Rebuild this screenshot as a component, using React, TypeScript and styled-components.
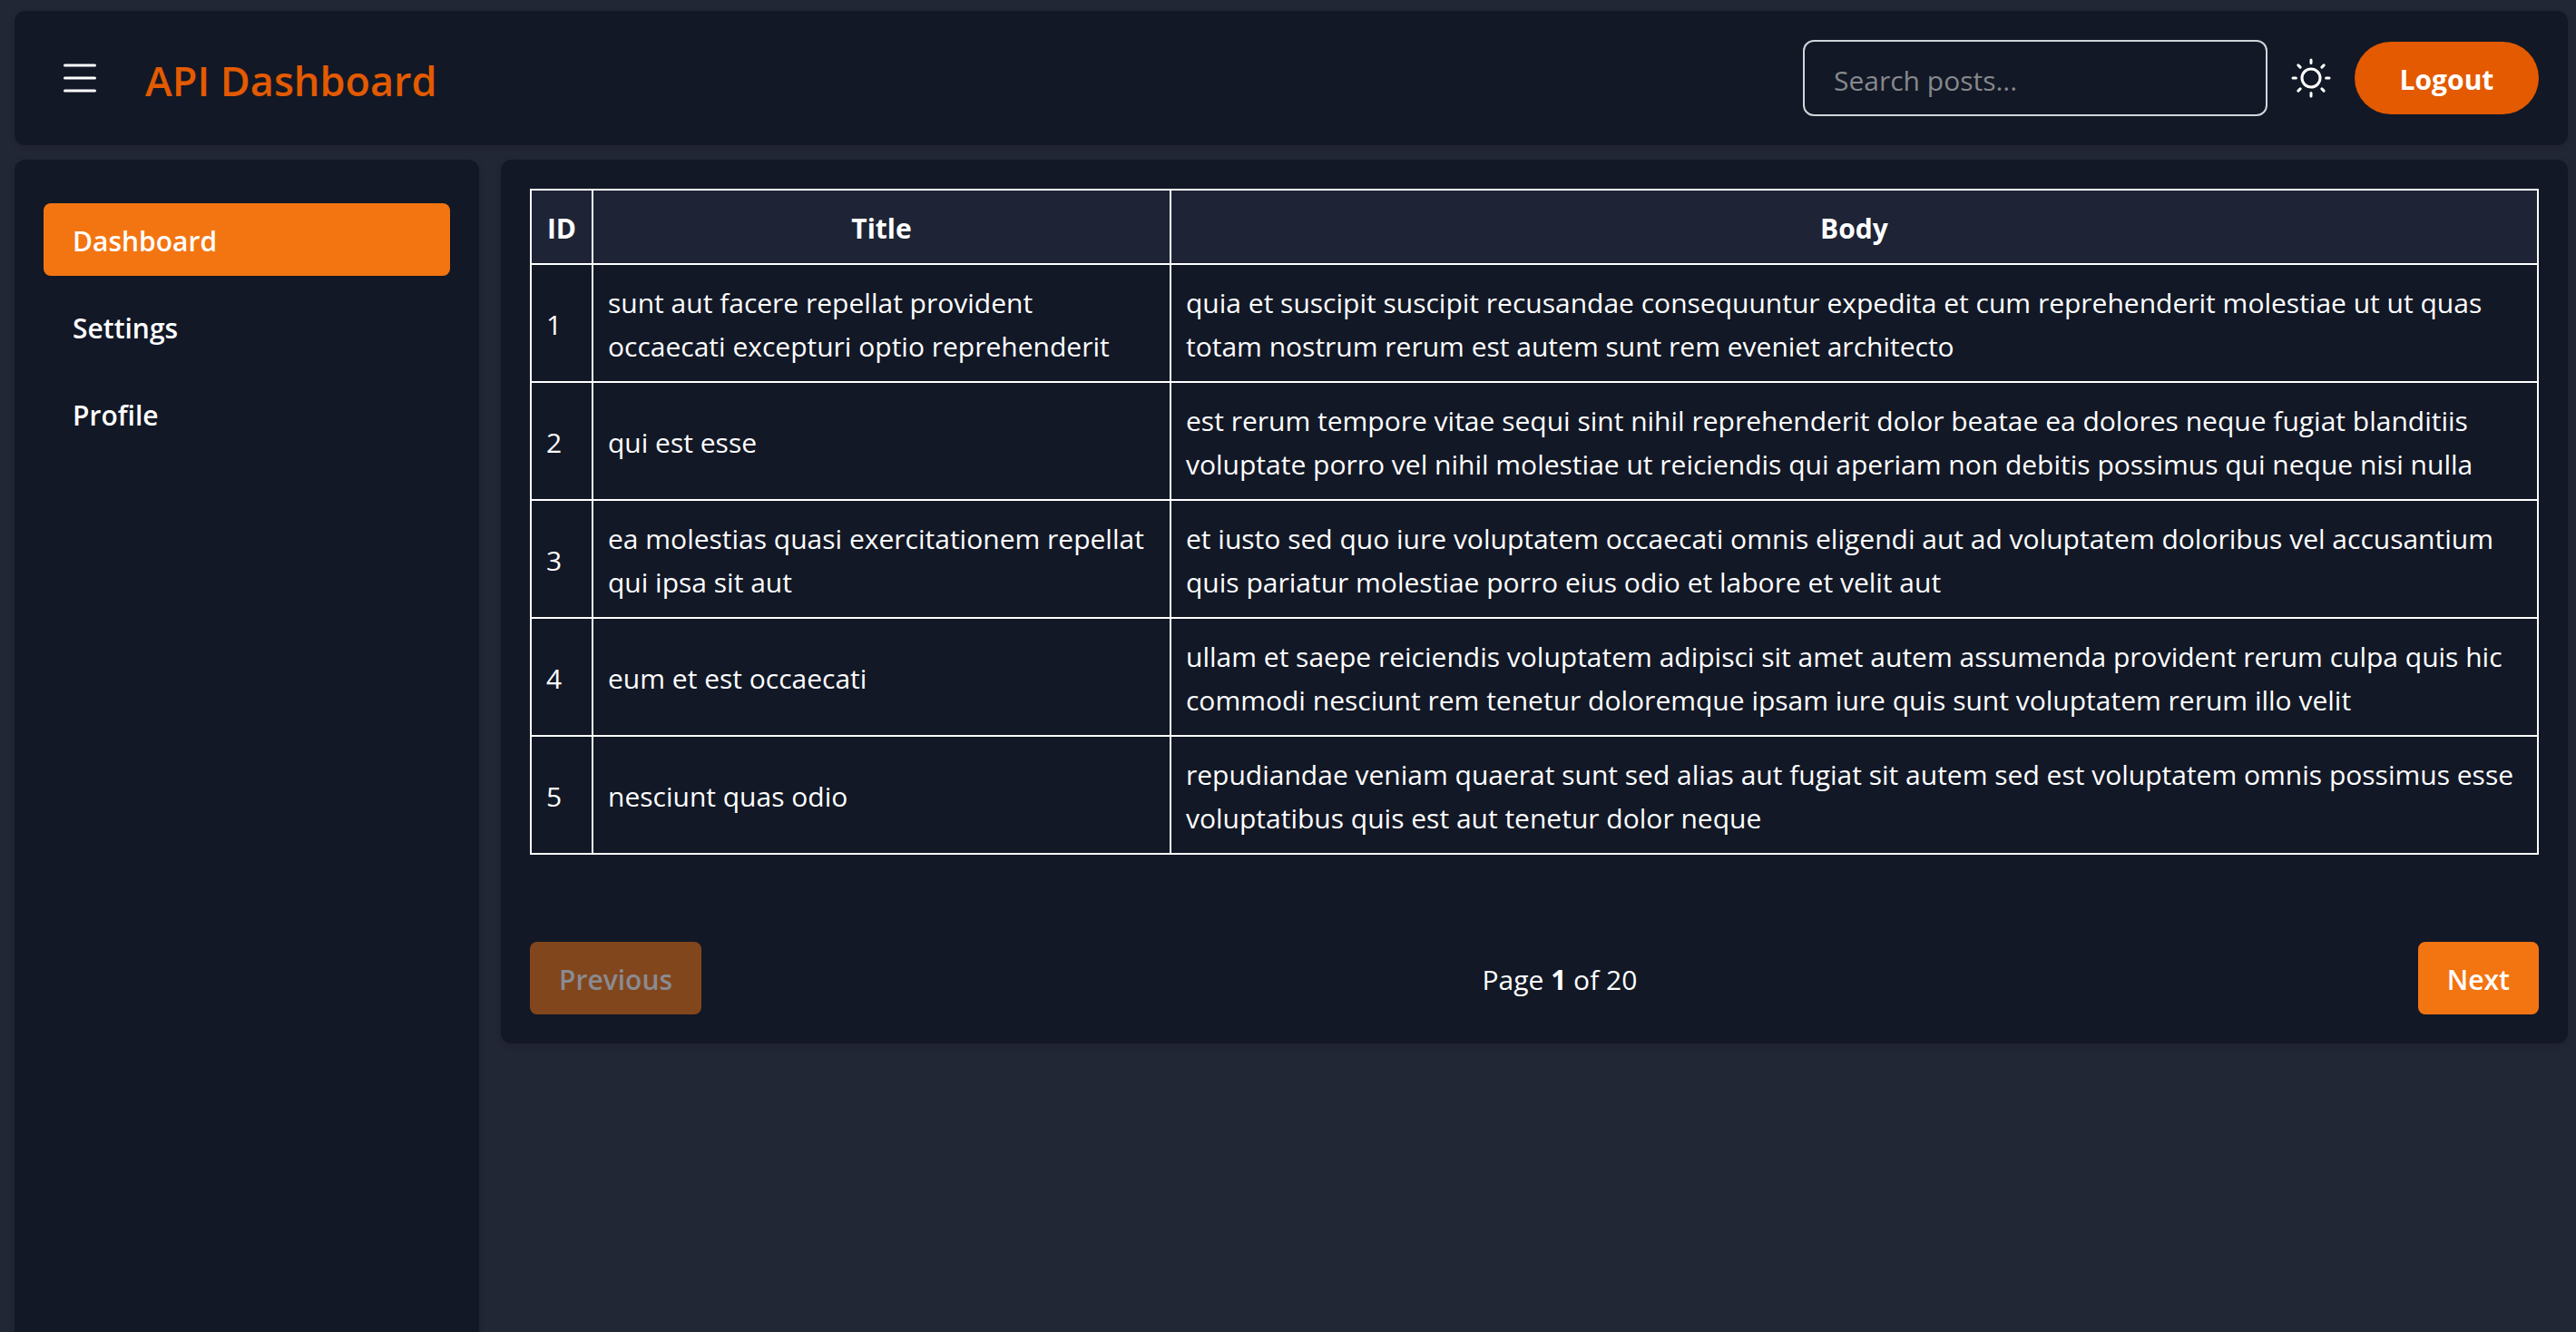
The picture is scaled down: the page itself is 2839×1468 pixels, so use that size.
import React, { useState } from "react";
import styled, { createGlobalStyle } from "styled-components";

const GlobalStyle = createGlobalStyle`
  *, *::before, *::after { box-sizing: border-box; }
  body {
    margin: 0;
    background: #222736;
    color: #fff;
    font-family: "Segoe UI", "Open Sans", "Noto Sans", sans-serif;
    font-size: 30px;
    line-height: 48px;
  }
  button, input { font: inherit; color: inherit; }
`;

const Page = styled.div`
  display: flex;
  flex-direction: column;
  gap: 16px;
  min-height: 100vh;
  padding: 12px 9px 0 16px;
`;

const panelShadow = "0 2px 6px rgba(30, 16, 24, 0.3)";

const Header = styled.header`
  display: flex;
  align-items: center;
  justify-content: space-between;
  padding: 32px 32px 32px 48px;
  border-radius: 12px;
  background: #121826;
  box-shadow: ${panelShadow};
`;

const Group = styled.div<{ $gap: number }>`
  display: flex;
  align-items: center;
  gap: ${(p) => p.$gap}px;
  min-height: 84px;
`;

const IconButton = styled.button`
  display: flex;
  padding: 0;
  border: 0;
  background: none;
  cursor: pointer;
`;

const Brand = styled.h1`
  margin: 0;
  padding-top: 6px;
  color: #e35a00;
  font-size: 45px;
  font-weight: 600;
  line-height: 64px;
`;

const Search = styled.input`
  width: 512px;
  height: 84px;
  padding: 4px 32px 0;
  border: 2px solid #d1d5db;
  border-radius: 12px;
  background: transparent;
  &::placeholder { color: #86888c; opacity: 1; }
`;

const Logout = styled.button`
  min-width: 203px;
  padding: 18px 48px 14px;
  border: 0;
  border-radius: 40px;
  background: #e35a00;
  font-weight: 700;
  cursor: pointer;
`;

const Columns = styled.div`
  display: flex;
  flex: 1;
  align-items: flex-start;
  gap: 24px;
`;

const Sidebar = styled.nav`
  display: flex;
  flex-direction: column;
  flex: 0 0 512px;
  align-self: stretch;
  gap: 16px;
  padding: 48px 32px;
  border-radius: 12px 12px 0 0;
  background: #121826;
  box-shadow: ${panelShadow};
`;

const NavLink = styled.a<{ $active: boolean }>`
  padding: 18px 32px 14px;
  border-radius: 8px;
  background: ${(p) => (p.$active ? "#f37512" : "transparent")};
  color: #fff;
  font-weight: 600;
  text-decoration: none;
`;

const Main = styled.main`
  flex: 1;
  min-width: 0;
  padding: 32px;
  border-radius: 12px;
  background: #121826;
  box-shadow: ${panelShadow};
`;

const Table = styled.table`
  width: 100%;
  table-layout: fixed;
  border-collapse: collapse;
  th, td {
    padding: 18px 16px 14px;
    border: 2px solid #fff;
  }
  th {
    background: #1e2435;
    font-weight: 700;
  }
`;

const Col = styled.col<{ $width?: number }>`
  width: ${(p) => (p.$width ? `${p.$width}px` : "auto")};
`;

const Pagination = styled.div`
  display: flex;
  align-items: center;
  justify-content: space-between;
  margin-top: 96px;
`;

const PageStatus = styled.span`
  padding: 18px 0 14px;
`;

const PageButton = styled.button`
  padding: 18px 32px 14px;
  border: 0;
  border-radius: 8px;
  background: #f37512;
  font-weight: 600;
  cursor: pointer;
  &:disabled {
    background: #82461c;
    color: #898b92;
    cursor: not-allowed;
  }
`;

const links = ["Dashboard", "Settings", "Profile"];

const posts = [
  {
    id: 1,
    title: "sunt aut facere repellat provident occaecati excepturi optio reprehenderit",
    body: "quia et suscipit suscipit recusandae consequuntur expedita et cum reprehenderit molestiae ut ut quas totam nostrum rerum est autem sunt rem eveniet architecto",
  },
  {
    id: 2,
    title: "qui est esse",
    body: "est rerum tempore vitae sequi sint nihil reprehenderit dolor beatae ea dolores neque fugiat blanditiis voluptate porro vel nihil molestiae ut reiciendis qui aperiam non debitis possimus qui neque nisi nulla",
  },
  {
    id: 3,
    title: "ea molestias quasi exercitationem repellat qui ipsa sit aut",
    body: "et iusto sed quo iure voluptatem occaecati omnis eligendi aut ad voluptatem doloribus vel accusantium quis pariatur molestiae porro eius odio et labore et velit aut",
  },
  {
    id: 4,
    title: "eum et est occaecati",
    body: "ullam et saepe reiciendis voluptatem adipisci sit amet autem assumenda provident rerum culpa quis hic commodi nesciunt rem tenetur doloremque ipsam iure quis sunt voluptatem rerum illo velit",
  },
  {
    id: 5,
    title: "nesciunt quas odio",
    body: "repudiandae veniam quaerat sunt sed alias aut fugiat sit autem sed est voluptatem omnis possimus esse voluptatibus quis est aut tenetur dolor neque",
  },
];

const MenuIcon = () => (
  <svg width="48" height="48" viewBox="0 0 48 48" fill="none" stroke="currentColor" strokeWidth="3" strokeLinecap="round" aria-hidden="true">
    <path d="M7.5 10h33M7.5 24h33M7.5 38h33" />
  </svg>
);

const SunIcon = () => (
  <svg width="48" height="48" viewBox="0 0 48 48" fill="none" stroke="currentColor" strokeWidth="3" strokeLinecap="round" aria-hidden="true">
    <circle cx="24" cy="24" r="10" />
    <path d="M24 4v3.4M24 40.6V44M4 24h3.4M40.6 24H44M9.9 9.9l2.2 2.2M35.9 35.9l2.2 2.2M9.9 38.1l2.2-2.2M35.9 12.1l2.2-2.2" />
  </svg>
);

export default function App() {
  const [active, setActive] = useState("Dashboard");
  const [query, setQuery] = useState("");

  return (
    <>
      <GlobalStyle />
      <Page>
        <Header>
          <Group $gap={48}>
            <IconButton type="button" aria-label="Toggle menu">
              <MenuIcon />
            </IconButton>
            <Brand>API Dashboard</Brand>
          </Group>
          <Group $gap={24}>
            <Search
              type="text"
              aria-label="Search posts"
              placeholder="Search posts..."
              value={query}
              onChange={(e) => setQuery(e.target.value)}
            />
            <IconButton type="button" aria-label="Toggle theme">
              <SunIcon />
            </IconButton>
            <Logout type="button">Logout</Logout>
          </Group>
        </Header>
        <Columns>
          <Sidebar>
            {links.map((name) => (
              <NavLink key={name} href={`#${name.toLowerCase()}`} $active={name === active} onClick={() => setActive(name)}>
                {name}
              </NavLink>
            ))}
          </Sidebar>
          <Main>
            <Table>
              <colgroup>
                <Col $width={68} />
                <Col $width={637} />
                <Col />
              </colgroup>
              <thead>
                <tr>
                  <th scope="col">ID</th>
                  <th scope="col">Title</th>
                  <th scope="col">Body</th>
                </tr>
              </thead>
              <tbody>
                {posts.map((post) => (
                  <tr key={post.id}>
                    <td>{post.id}</td>
                    <td>{post.title}</td>
                    <td>{post.body}</td>
                  </tr>
                ))}
              </tbody>
            </Table>
            <Pagination>
              <PageButton type="button" disabled>Previous</PageButton>
              <PageStatus>Page <strong>1</strong> of 20</PageStatus>
              <PageButton type="button">Next</PageButton>
            </Pagination>
          </Main>
        </Columns>
      </Page>
    </>
  );
}
